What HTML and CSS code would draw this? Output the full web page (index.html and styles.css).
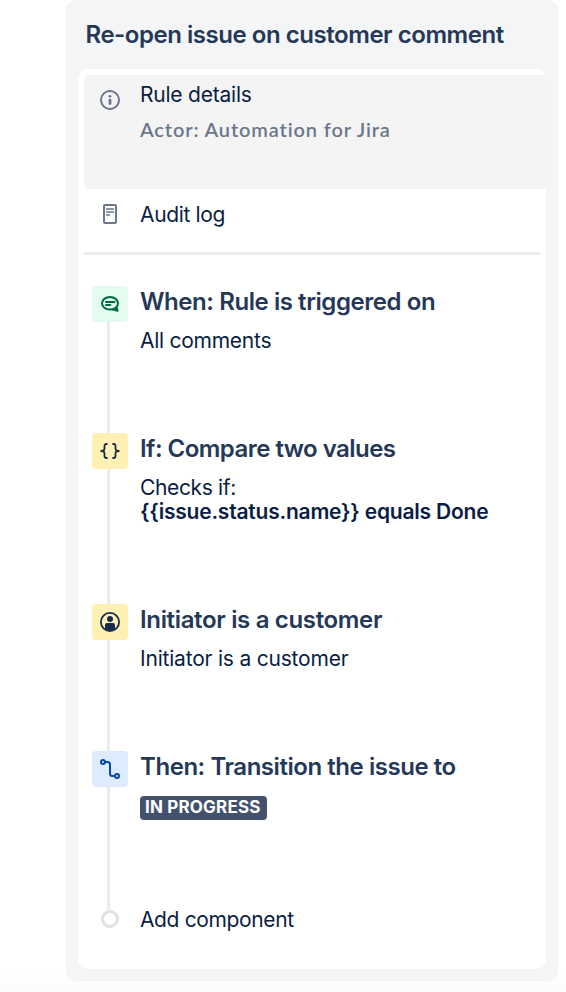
FILE: index.html
```
<!DOCTYPE html>
<html lang="en">
<head>
    <meta charset="UTF-8">
    <meta name="viewport" content="width=device-width, initial-scale=1.0">
    <title>Re-open issue on customer comment</title>
    <link rel="stylesheet" href="styles.css">
</head>
<body>
    <div class="panel">
        <h1 class="title">Re-open issue on customer comment</h1>
        <div class="card">
            <div class="details">
                <svg class="details-icon" width="20" height="20" viewBox="0 0 20 20" fill="none">
                    <circle cx="10" cy="10" r="9" stroke="#6b778c" stroke-width="2"/>
                    <circle cx="10" cy="6.3" r="1.4" fill="#6b778c"/>
                    <rect x="8.6" y="8.7" width="2.8" height="6.2" rx="1.3" fill="#6b778c"/>
                </svg>
                <div>
                    <div class="label label-details">Rule details</div>
                    <div class="actor">Actor: Automation for Jira</div>
                </div>
            </div>
            <div class="audit">
                <svg class="audit-icon" width="14" height="20" viewBox="0 0 14 20" fill="none" stroke="#6b778c">
                    <rect x="1" y="1" width="12" height="18" rx="1" stroke-width="2"/>
                    <path d="M3 5h8M3 8h8M3 11h4" stroke-width="1.7"/>
                </svg>
                <div class="label label-audit">Audit log</div>
            </div>
            <div class="divider"></div>
            <div class="steps">
                <div class="step step-when">
                    <div class="rail">
                        <div class="icon icon-green">
                            <svg width="20" height="20" viewBox="0 0 20 20" fill="none" stroke="#006644" stroke-width="2">
                                <ellipse cx="10" cy="9.300" rx="8" ry="6.300"/>
                                <path d="M12 15.300L17.500 16.800L16.700 13.200" stroke-linejoin="round"/>
                                <path d="M6 8h8.500M6 11h4.500" stroke-width="1.800" stroke-linecap="round"/>
                            </svg>
                        </div>
                        <div class="line"></div>
                    </div>
                    <div class="content">
                        <h2 class="name name-when">When: Rule is triggered on</h2>
                        <p class="text text-when">All comments</p>
                    </div>
                </div>
                <div class="step step-if">
                    <div class="rail">
                        <div class="icon icon-yellow">
                            <svg width="20" height="20" viewBox="0 0 20 20" fill="none" stroke="#172b4d" stroke-width="1.800">
                                <path d="M7.600 3H6.500Q4.500 3 4.500 5V7.800Q4.500 10 .5 10Q4.500 10 4.500 12.200V15Q4.500 17 6.500 17H7.600"/>
                                <path d="M12.400 3H13.500Q15.500 3 15.500 5V7.800Q15.500 10 19.500 10Q15.500 10 15.500 12.200V15Q15.500 17 13.500 17H12.400"/>
                            </svg>
                        </div>
                        <div class="line"></div>
                    </div>
                    <div class="content">
                        <h2 class="name name-if">If: Compare two values</h2>
                        <p class="text text-if">Checks if:</p>
                        <p class="text condition">{{issue.status.name}} equals Done</p>
                    </div>
                </div>
                <div class="step step-initiator">
                    <div class="rail">
                        <div class="icon icon-yellow">
                            <svg width="20" height="20" viewBox="0 0 20 20" fill="#172b4d">
                                <circle cx="10" cy="10" r="9.100" fill="none" stroke="#172b4d" stroke-width="1.800"/>
                                <circle cx="10" cy="7" r="3"/>
                                <path d="M5 17V13Q5 11 7 11H13Q15 11 15 13V17L10 19Z"/>
                            </svg>
                        </div>
                        <div class="line"></div>
                    </div>
                    <div class="content">
                        <h2 class="name name-initiator">Initiator is a customer</h2>
                        <p class="text text-initiator">Initiator is a customer</p>
                    </div>
                </div>
                <div class="step step-then">
                    <div class="rail">
                        <div class="icon icon-blue">
                            <svg width="20" height="20" viewBox="0 0 20 20" fill="none" stroke="#0747a6" stroke-width="2">
                                <circle cx="3" cy="3" r="2"/>
                                <circle cx="17" cy="17" r="2"/>
                                <path d="M5 3H7.500Q10 3 10 5.500V14.500Q10 17 12.500 17H15"/>
                            </svg>
                        </div>
                        <div class="line"></div>
                    </div>
                    <div class="content">
                        <h2 class="name name-then">Then: Transition the issue to</h2>
                        <div class="status">IN PROGRESS</div>
                    </div>
                </div>
                <div class="add">
                    <div class="dot"></div>
                    <div class="label label-add">Add component</div>
                </div>
            </div>
        </div>
    </div>
</body>
</html>
```
FILE: styles.css
```
* {
    box-sizing: border-box;
}
body {
    margin: 0;
    height: 992px;
    overflow: hidden;
    background: linear-gradient(#fff 970px, #fcfcfc 992px);
    font-family: Inter, "Liberation Sans", sans-serif;
    color: #091e42;
}
h1, h2, p {
    margin: 0;
}
svg {
    display: block;
}
.panel {
    width: 492px;
    height: 981px;
    margin-left: 66px;
    padding: 0 12px 12px;
    background: #f4f5f7;
    border-radius: 10px;
}
.title {
    height: 69px;
    padding-left: 7.5px;
    font-size: 24px;
    font-weight: 600;
    line-height: 70px;
    letter-spacing: -0.46px;
    color: #253858;
    white-space: nowrap;
}
.card {
    height: 900px;
    padding: 6px 0 0 6px;
    background: #fff;
    border-radius: 10px;
    overflow: hidden;
}
.details {
    display: flex;
    height: 114px;
    padding: 6px 0 0 16px;
    gap: 20px;
    background: #f4f4f4;
    border-radius: 6px 0 0 6px;
}
.details-icon {
    margin-top: 9px;
}
.label {
    font-size: 21px;
    line-height: 28px;
    white-space: nowrap;
}
.label-details {
    letter-spacing: -0.22px;
}
.label-audit {
    letter-spacing: -0.35px;
}
.label-add {
    padding-top: 2px;
    letter-spacing: -0.37px;
}
.actor {
    margin-top: 6px;
    font-family: Lato, sans-serif;
    font-size: 20px;
    font-weight: 600;
    line-height: 28px;
    letter-spacing: 0.86px;
    color: #6b778c;
}
.audit {
    display: flex;
    align-items: flex-start;
    height: 63px;
    padding: 12px 0 0 19px;
    gap: 23px;
}
.audit-icon {
    margin-top: 3px;
}
.divider {
    width: 456px;
    height: 3px;
    background: #ebecf0;
}
.steps {
    padding: 31px 0 0 8px;
}
.step {
    display: flex;
    gap: 12px;
}
.step-when,
.step-initiator {
    height: 147px;
}
.step-if {
    height: 171px;
}
.step-then {
    height: 159px;
}
.rail {
    display: flex;
    flex-direction: column;
    width: 36px;
}
.icon {
    display: flex;
    align-items: center;
    justify-content: center;
    height: 36px;
    border-radius: 4px;
}
.icon-green {
    background: #e3fcef;
}
.icon-yellow {
    background: #fff0b3;
}
.icon-blue {
    background: #deebff;
}
.line {
    flex: 1;
    width: 3px;
    margin-left: 15px;
    background: #ebecf0;
}
.content {
    padding-top: 2px;
    white-space: nowrap;
}
.name {
    margin-bottom: 13px;
    font-size: 24px;
    font-weight: 600;
    line-height: 28px;
    color: #253858;
}
.name-when {
    letter-spacing: -0.43px;
}
.name-if {
    letter-spacing: -0.53px;
}
.name-initiator {
    letter-spacing: -0.34px;
}
.name-then {
    letter-spacing: -0.45px;
}
.text {
    font-size: 21px;
    line-height: 24px;
}
.text-when {
    letter-spacing: -0.26px;
}
.text-if {
    letter-spacing: -0.36px;
}
.text-initiator {
    letter-spacing: -0.2px;
}
.condition {
    font-weight: 600;
    letter-spacing: -0.22px;
}
.status {
    width: 127px;
    height: 24px;
    margin-top: 15px;
    padding-left: 5px;
    background: #42526e;
    border-radius: 4px;
    font-size: 17px;
    font-weight: 700;
    line-height: 23px;
    letter-spacing: 0.18px;
    color: #fff;
}
.add {
    display: flex;
    height: 18px;
    align-items: center;
    padding-left: 9px;
    gap: 21px;
}
.dot {
    width: 18px;
    height: 18px;
    border: 3px solid #dfe1e6;
    border-radius: 50%;
    background: #fff;
}
```
